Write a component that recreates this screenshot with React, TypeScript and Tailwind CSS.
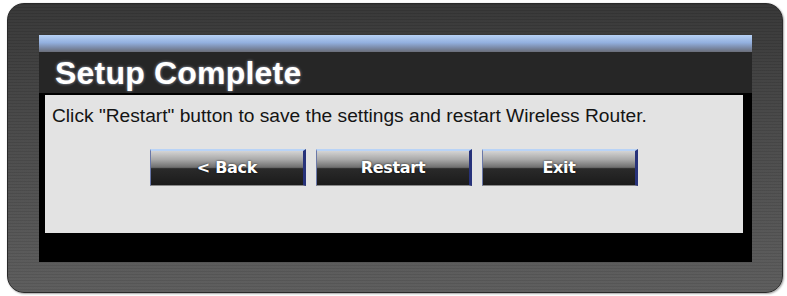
import React from "react";

function Btn({ label }: { label: string }) {
  return (
    <button className="relative w-[156px] h-[37px] flex items-center justify-center border-l border-l-[#6a78a8] border-r-[3px] border-r-[#27327a] border-t-2 border-t-[#b9d3f6] border-b border-b-[#8a8a8a] bg-[linear-gradient(to_bottom,#d4d4d4_0%,#a9a9a9_25%,#6f6f6f_48%,#2a2a2a_52%,#1b1b1b_100%)]">
      <span className="font-['DejaVu_Sans',sans-serif] font-bold text-[16px] text-white [text-shadow:0_0_2px_rgba(0,0,0,0.8)] tracking-[-0.3px]">
        {label}
      </span>
    </button>
  );
}

export default function App() {
  return (
    <div className="w-[787px] h-[296px] bg-white pt-[3px] pl-[7px]">
      <div className="w-[776px] h-[290px] rounded-[17px] border border-[#2a2a2a] shadow-[1px_1px_2px_rgba(0,0,0,0.35),0_0_1px_rgba(0,0,0,0.2)] bg-[image:repeating-linear-gradient(to_bottom,rgba(0,0,0,0.06)_0px,rgba(0,0,0,0.06)_1px,rgba(255,255,255,0.015)_1px,rgba(255,255,255,0.015)_3px),linear-gradient(to_bottom,#363636,#474747_40%,#5c5c5c)] p-[31px]">
        <div className="w-[713px] h-[227px] flex flex-col">
          <div className="h-[17px] bg-[linear-gradient(to_bottom,#b8d2f6,#93b0df_45%,#7b8aa8_75%,#6a6e78)]" />
          <div className="h-[41px] bg-[#262626] flex items-center pl-[16px]">
            <span className="font-['Liberation_Sans',Arial,sans-serif] font-bold text-[32px] leading-none text-white [text-shadow:0_0_3px_rgba(220,230,255,0.7)] tracking-[0.2px]">
              Setup Complete
            </span>
          </div>
          <div className="flex-1 bg-black pl-[6px] pr-[9px] pt-[2px] pb-[29px] flex">
            <div className="flex-1 bg-[#e3e3e3] flex flex-col">
              <p className="pl-[7px] pt-[9px] font-['Liberation_Sans',Arial,sans-serif] text-[19.2px] leading-[24px] text-[#141414]">
                Click "Restart" button to save the settings and restart Wireless Router.
              </p>
              <div className="flex justify-center gap-[10px] mt-[21px]">
                <Btn label="< Back" />
                <Btn label="Restart" />
                <Btn label="Exit" />
              </div>
            </div>
          </div>
        </div>
      </div>
    </div>
  );
}
